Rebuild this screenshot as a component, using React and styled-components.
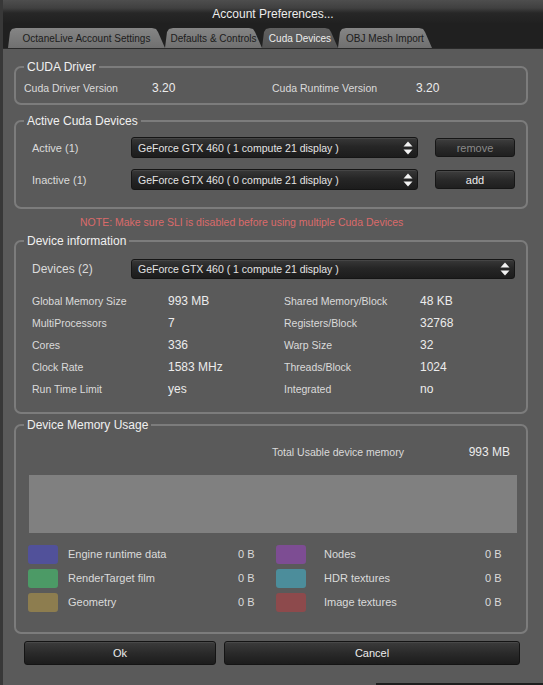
import React from 'react'
import styled, { createGlobalStyle } from 'styled-components'

const GlobalStyle = createGlobalStyle`
    html, body{
        margin: 0;
        padding: 0;
        background: #5a5a5a;
    }
    body{
        font-family: "Liberation Sans", Arial, sans-serif;
        color: #dcdcdc;
    }
`
const Dialog = styled.div`
    width: 543px;
    height: 685px;
    box-sizing: border-box;
    border-left: 3px solid #383838;
    background: #5a5a5a;
    display: flex;
    flex-direction: column;
    overflow: hidden;
`
const TitleBar = styled.div`
    height: 24px;
    box-sizing: border-box;
    padding-top: 7px;
    line-height: 15px;
    font-size: 12px;
    text-align: center;
    color: #ececec;
    background: linear-gradient(to bottom, #4e4e4e 0, #404040 8px, #272727 13px, #202020 100%);
`
const TabBar = styled.div`
    height: 25px;
    background: #202020;
    display: flex;
    align-items: flex-end;
    padding-left: 5px;
    border-bottom: 1px solid #2a2a2a;
`
const Tab = styled.div`
    width: ${p => p.$w}px;
    height: 20px;
    line-height: 22px;
    font-size: 10px;
    text-align: center;
    white-space: nowrap;
    color: ${p => p.$active ? '#ececec' : '#1c1c1c'};
    background: ${p => p.$active
        ? 'linear-gradient(#606060, #545454)'
        : 'linear-gradient(#858585, #707070)'};
    clip-path: polygon(2px 4px, 4px 1px, 8px 0, calc(100% - 13px) 0, calc(100% - 9px) 1px, calc(100% - 7px) 4px, 100% 100%, 0 100%);
`
const Content = styled.div`
    flex: 1;
    display: flex;
    flex-direction: column;
    padding-top: 11px;
`
const GroupBox = styled.fieldset`
    margin: ${p => p.$top || 0}px 15px 0 11px;
    padding: 0;
    min-width: 0;
    border: 2px solid #7c7c7c;
    border-radius: 7px;
`
const Legend = styled.legend`
    margin-left: 8px;
    padding: 0 3px;
    font-size: 12px;
    line-height: 14px;
    color: #f0f0f0;
`
const DriverBody = styled.div`
    display: grid;
    grid-template-columns: 128px 120px 144px auto;
    align-items: center;
    padding: 6px 0 7px 8px;
    line-height: 16px;
`
const Label = styled.span`
    font-size: ${p => p.$size || 10.5}px;
    color: #dadada;
    white-space: nowrap;
`
const Value = styled.span`
    font-size: 12px;
    color: #ececec;
    white-space: nowrap;
`
const ActiveBody = styled.div`
    display: grid;
    grid-template-columns: 99px 287px 97px;
    row-gap: 11px;
    align-items: center;
    padding: 9px 0 17px 16px;
`
const Combo = styled.div`
    display: flex;
    align-items: center;
    justify-content: space-between;
    height: ${p => p.$h || 21}px;
    box-sizing: border-box;
    padding: 0 4px 0 6px;
    background: linear-gradient(#383838, #262626 45%, #1c1c1c);
    border: 1px solid #151515;
    border-radius: 3px;
    box-shadow: inset 0 1px 0 rgba(255, 255, 255, 0.07);
    color: #e4e4e4;
    font-size: 10.5px;
    white-space: nowrap;
`
const SmallButton = styled.div`
    height: 19px;
    margin-left: 17px;
    box-sizing: border-box;
    display: flex;
    align-items: center;
    justify-content: center;
    background: linear-gradient(#3e3e3e, #2a2a2a 50%, #1f1f1f);
    border: 1px solid #161616;
    border-radius: 3px;
    box-shadow: inset 0 1px 0 rgba(255, 255, 255, 0.06);
    color: ${p => p.$disabled ? '#8a8a8a' : '#ececec'};
    font-size: 11px;
`
const Note = styled.div`
    margin: 6px 0 0 77px;
    line-height: 14px;
    font-size: 10.5px;
    color: #da6a6a;
`
const InfoBody = styled.div`
    padding: 11px 11px 12px 16px;
`
const DevicesRow = styled.div`
    display: grid;
    grid-template-columns: 99px 1fr;
    align-items: center;
    margin-bottom: 11px;
`
const InfoGrid = styled.div`
    display: grid;
    grid-template-columns: 136px 116px 136px auto;
    grid-auto-rows: 22px;
    align-items: center;
`
const MemoryBody = styled.div`
    padding: 12px 9px 18px 13px;
`
const TotalRow = styled.div`
    display: grid;
    grid-template-columns: 1fr auto;
    align-items: center;
    line-height: 16px;
    padding: 0 7px 0 243px;
`
const UsageBar = styled.div`
    height: 58px;
    margin-top: 15px;
    background: #808080;
`
const LegendGrid = styled.div`
    display: grid;
    grid-template-columns: 40px 170px 38px 48px 161px auto;
    grid-auto-rows: 24px;
    align-items: center;
    margin: 9px 0 0 -1px;
`
const Swatch = styled.div`
    width: 30px;
    height: 19px;
    border-radius: 3px;
    background: ${p => p.$color};
`
const ButtonRow = styled.div`
    display: flex;
    gap: 8px;
    margin: 7px 0 0 21px;
`
const DialogButton = styled.div`
    width: ${p => p.$w}px;
    height: 24px;
    box-sizing: border-box;
    display: flex;
    align-items: center;
    justify-content: center;
    background: linear-gradient(#3c3c3c, #2a2a2a 50%, #1c1c1c);
    border: 1px solid #141414;
    border-radius: 3px;
    box-shadow: inset 0 1px 0 rgba(255, 255, 255, 0.07);
    color: #ececec;
    font-size: 11px;
`
const BehindEdge = styled.div`
    margin: 18px 0 0 auto;
    width: 165px;
    flex: 1;
    border-top: 2px solid #1e1e1e;
    border-left: 2px solid #1e1e1e;
`

function SpinArrows() {
    return (
        <svg width="10" height="14" viewBox="0 0 10 14">
            <path d="M5 0.5 L9.5 5.5 L0.5 5.5 Z" fill="#f2f2f2" />
            <path d="M0.5 8.5 L9.5 8.5 L5 13.5 Z" fill="#f2f2f2" />
        </svg>
    )
}

const tabs = [
    { name: 'OctaneLive Account Settings', w: 157 },
    { name: 'Defaults & Controls', w: 97 },
    { name: 'Cuda Devices', w: 76, active: true },
    { name: 'OBJ Mesh Import', w: 94 },
]

const info = [
    ['Global Memory Size', '993 MB', 'Shared Memory/Block', '48 KB'],
    ['MultiProcessors', '7', 'Registers/Block', '32768'],
    ['Cores', '336', 'Warp Size', '32'],
    ['Clock Rate', '1583 MHz', 'Threads/Block', '1024'],
    ['Run Time Limit', 'yes', 'Integrated', 'no'],
]

const memory = [
    ['#51519a', 'Engine runtime data', '#7d4d93', 'Nodes'],
    ['#4c9a66', 'RenderTarget film', '#4c8d9b', 'HDR textures'],
    ['#8d7d4f', 'Geometry', '#8d4a4c', 'Image textures'],
]

export default function App() {
    return (
        <>
            <GlobalStyle />
            <Dialog>
                <TitleBar>Account Preferences...</TitleBar>
                <TabBar>
                    {tabs.map(t => (
                        <Tab key={t.name} $w={t.w} $active={t.active}>{t.name}</Tab>
                    ))}
                </TabBar>
                <Content>
                    <GroupBox>
                        <Legend>CUDA Driver</Legend>
                        <DriverBody>
                            <Label>Cuda Driver Version</Label>
                            <Value>3.20</Value>
                            <Label>Cuda Runtime Version</Label>
                            <Value>3.20</Value>
                        </DriverBody>
                    </GroupBox>

                    <GroupBox $top={9}>
                        <Legend>Active Cuda Devices</Legend>
                        <ActiveBody>
                            <Label $size={11}>Active (1)</Label>
                            <Combo>GeForce GTX 460 ( 1 compute 21 display )<SpinArrows /></Combo>
                            <SmallButton $disabled>remove</SmallButton>
                            <Label $size={11}>Inactive (1)</Label>
                            <Combo>GeForce GTX 460 ( 0 compute 21 display )<SpinArrows /></Combo>
                            <SmallButton>add</SmallButton>
                        </ActiveBody>
                    </GroupBox>

                    <Note>NOTE: Make sure SLI is disabled before using multiple Cuda Devices</Note>

                    <GroupBox $top={5}>
                        <Legend>Device information</Legend>
                        <InfoBody>
                            <DevicesRow>
                                <Label $size={12}>Devices (2)</Label>
                                <Combo $h={20}>GeForce GTX 460 ( 1 compute 21 display )<SpinArrows /></Combo>
                            </DevicesRow>
                            <InfoGrid>
                                {info.map(row => row.map((cell, i) => (
                                    i % 2 === 0
                                        ? <Label key={row[0] + i}>{cell}</Label>
                                        : <Value key={row[0] + i}>{cell}</Value>
                                )))}
                            </InfoGrid>
                        </InfoBody>
                    </GroupBox>

                    <GroupBox $top={4}>
                        <Legend>Device Memory Usage</Legend>
                        <MemoryBody>
                            <TotalRow>
                                <Label>Total Usable device memory</Label>
                                <Value>993 MB</Value>
                            </TotalRow>
                            <UsageBar />
                            <LegendGrid>
                                {memory.map(([c1, l1, c2, l2]) => (
                                    <React.Fragment key={l1}>
                                        <Swatch $color={c1} />
                                        <Label $size={11}>{l1}</Label>
                                        <Label $size={11}>0 B</Label>
                                        <Swatch $color={c2} />
                                        <Label $size={11}>{l2}</Label>
                                        <Label $size={11}>0 B</Label>
                                    </React.Fragment>
                                ))}
                            </LegendGrid>
                        </MemoryBody>
                    </GroupBox>

                    <ButtonRow>
                        <DialogButton $w={192}>Ok</DialogButton>
                        <DialogButton $w={296}>Cancel</DialogButton>
                    </ButtonRow>
                    <BehindEdge />
                </Content>
            </Dialog>
        </>
    )
}
